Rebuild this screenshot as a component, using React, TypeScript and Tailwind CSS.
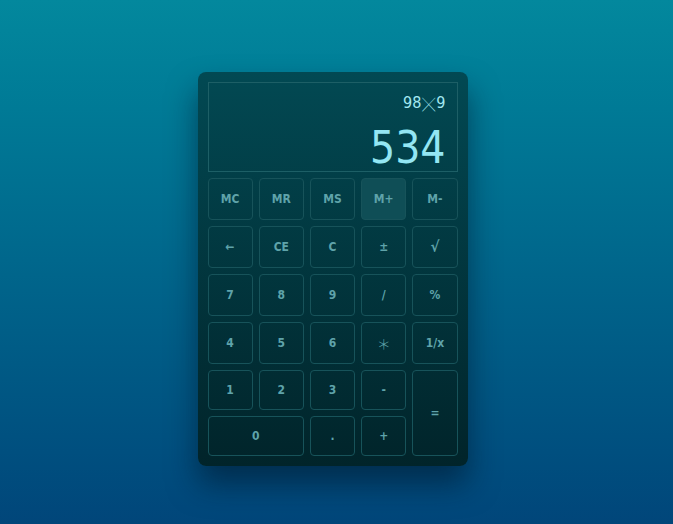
import React from "react";

const font = { fontFamily: '"DejaVu Sans Condensed", "DejaVu Sans", Tahoma, sans-serif' };

type Key = { label: string; cls?: string; star?: boolean; active?: boolean };

const keys: Key[] = [
  { label: "MC" }, { label: "MR" }, { label: "MS" }, { label: "M+", active: true }, { label: "M-" },
  { label: "←" }, { label: "CE" }, { label: "C" }, { label: "±" }, { label: "√", cls: "text-[15px]" },
  { label: "7" }, { label: "8" }, { label: "9" }, { label: "/" }, { label: "%" },
  { label: "4" }, { label: "5" }, { label: "6" }, { label: "*", star: true }, { label: "1/x" },
  { label: "1" }, { label: "2" }, { label: "3" }, { label: "-" }, { label: "=", cls: "row-span-2" },
  { label: "0", cls: "col-span-2" }, { label: "." }, { label: "+" },
];

export default function App() {
  return (
    <div
      className="min-h-[524px] w-full flex justify-center pt-[72px] pr-[8px] bg-gradient-to-b from-[#03889d] to-[#01467a]"
      style={font}
    >
      <div className="w-[270px] h-[394px] rounded-lg p-[10px] bg-gradient-to-b from-[#024953] to-[#01242a] shadow-[0_18px_30px_rgba(0,20,40,0.55)]">
        <div className="h-[90px] border border-[#1d5f66] flex flex-col items-end pr-[11px]">
          <div className="mt-[9px] text-[16px] leading-[22px] text-[#a3e9f2] flex items-center">
            98
            <span
              className="text-[13px] font-extralight mx-[1px] leading-none"
              style={{ fontFamily: '"Noto Sans CJK SC", sans-serif' }}
            >
              ╳
            </span>
            9
          </div>
          <div className="mt-[12px] text-[44px] leading-[44px] text-[#93e6f3]">534</div>
        </div>
        <div className="mt-[6px] grid grid-cols-5 grid-rows-[42px_42px_42px_42px_40px_40px] gap-[6px]">
          {keys.map((k) => (
            <div
              key={k.label}
              className={`flex items-center justify-center rounded-[4px] border border-[#17535a] text-[12px] font-bold text-[#5fa3aa] ${
                k.active ? "bg-[#0f4e56]" : ""
              } ${k.cls ?? ""}`}
            >
              {k.star ? (
                <span
                  className="text-[14px] font-light leading-none"
                  style={{ fontFamily: '"Noto Sans CJK SC", sans-serif' }}
                >
                  ＊
                </span>
              ) : (
                k.label
              )}
            </div>
          ))}
        </div>
      </div>
    </div>
  );
}
